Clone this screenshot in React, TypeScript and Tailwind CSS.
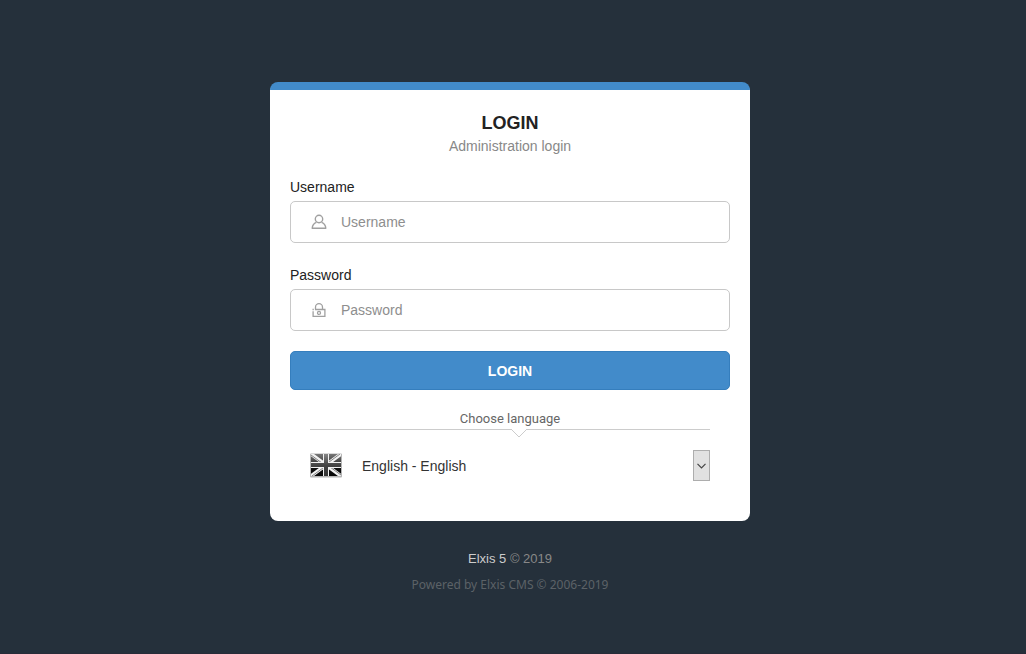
import React from "react";

function UserIcon() {
  return (
    <svg viewBox="0 0 16 16" className="h-4 w-4" fill="none" stroke="#a0a0a0" strokeWidth="1.4" strokeLinejoin="round" aria-hidden="true">
      <circle cx="8" cy="5" r="3.7" />
      <path d="M5.4 8.3C3 9.2 1.4 11 1.2 14.3H14.8C14.6 11 13 9.2 10.6 8.3" />
    </svg>
  );
}

function LockIcon() {
  return (
    <svg viewBox="0 0 16 16" className="h-4 w-4" fill="none" stroke="#a0a0a0" strokeWidth="1.3" aria-hidden="true">
      <path d="M4.5 7.5V5.2a3.5 3.5 0 0 1 7 0V7.5" />
      <path d="M4 7.5H13.9V14.4H2.1V9.2" />
      <path d="M1.5 7.5h1.3" />
      <circle cx="8" cy="10.9" r="1.5" />
    </svg>
  );
}

function FlagIcon() {
  return (
    <svg viewBox="0 0 32 25" className="h-[25px] w-8 shrink-0" aria-hidden="true">
      <defs>
        <linearGradient id="field" x1="0" y1="0" x2="0" y2="1">
          <stop offset="0" stopColor="#777777" />
          <stop offset="0.5" stopColor="#303030" />
          <stop offset="0.52" stopColor="#111111" />
          <stop offset="1" stopColor="#080808" />
        </linearGradient>
        <linearGradient id="cross" x1="0" y1="0" x2="0" y2="1">
          <stop offset="0" stopColor="#858585" />
          <stop offset="0.5" stopColor="#444444" />
          <stop offset="1" stopColor="#333333" />
        </linearGradient>
        <clipPath id="flagShape">
          <rect x="1" y="1" width="30" height="22" />
        </clipPath>
      </defs>
      <rect x="0" y="0.5" width="32" height="24" rx="1" fill="#b5b5b5" />
      <g clipPath="url(#flagShape)">
        <rect x="1" y="1" width="30" height="22" fill="url(#field)" />
        <path d="M1 1L31 23M31 1L1 23" stroke="#f2f2f2" strokeWidth="3.6" />
        <path d="M1 2L14 11.5M30 1L17 10.5M31 22L18 12.5M2 23L15 13.5" stroke="#666666" strokeWidth="0.8" />
        <path d="M16 1V23M1 12H31" stroke="#f2f2f2" strokeWidth="6" />
        <path d="M14 1h4v9h13v4H18v9h-4v-9H1v-4h13z" fill="url(#cross)" />
      </g>
    </svg>
  );
}

interface FieldProps {
  id: string;
  label: string;
  type: string;
  icon: React.ReactNode;
}

function Field({ id, label, type, icon }: FieldProps) {
  return (
    <div className="mb-5">
      <label htmlFor={id} className="mb-1 block text-sm leading-5 text-[#222222]">
        {label}
      </label>
      <div className="flex h-[42px] items-center gap-[14px] rounded-[5px] border border-[#c8c8c8] bg-white pr-3 pl-5 focus-within:border-[#428bca]">
        {icon}
        <input
          id={id}
          name={id}
          type={type}
          placeholder={label}
          className="h-full min-w-0 flex-1 bg-transparent text-sm text-[#222222] outline-none placeholder:text-[#8e8e8e]"
        />
      </div>
    </div>
  );
}

export default function App() {
  return (
    <div className="min-h-screen border-b border-[#272b38] bg-[#25303b] pt-[82px] pr-[6px] font-['Liberation_Sans',Arial,sans-serif]">
      <main className="mx-auto w-full max-w-[480px] rounded-lg border-t-8 border-[#428bca] bg-white px-5 pt-[22px] pb-10">
        <h1 className="text-center text-lg leading-[22px] font-bold text-[#222222]">LOGIN</h1>
        <p className="mb-[19px] text-center text-sm leading-6 text-[#888888]">Administration login</p>
        <form onSubmit={(event) => event.preventDefault()}>
          <div className="flex flex-col gap-0.5">
            <Field id="username" label="Username" type="text" icon={<UserIcon />} />
            <Field id="password" label="Password" type="password" icon={<LockIcon />} />
          </div>
          <button
            type="submit"
            className="block h-[39px] w-full rounded-[5px] border border-[#357ebd] bg-[#428bca] text-sm font-bold text-white hover:bg-[#3a80bd]"
          >
            LOGIN
          </button>
          <div className="px-5 pt-[19px]">
            <label htmlFor="language" className="relative block border-b border-[#cccccc] text-center font-[Roboto,sans-serif] text-[13px] leading-5 text-[#666666]">
              Choose language
              <svg viewBox="0 0 18 9" className="absolute top-full left-[200px] h-[9px] w-[18px]" fill="#ffffff" aria-hidden="true">
                <path d="M1 0L9 8L17 0" stroke="#cccccc" />
              </svg>
            </label>
            <div className="mt-5 flex items-center gap-5">
              <FlagIcon />
              <div className="relative min-w-0 flex-1">
                <select id="language" className="block h-[31px] w-full appearance-none bg-transparent pr-6 text-sm text-[#333333] outline-none">
                  <option>English - English</option>
                </select>
                <span className="pointer-events-none absolute inset-y-0 right-0 flex w-[17px] items-center justify-center border border-[#adadad] bg-[#e1e1e1]">
                  <svg viewBox="0 0 9 6" className="h-1.5 w-[9px]" fill="none" stroke="#444444" strokeWidth="1.2" aria-hidden="true">
                    <path d="M0.5 0.8L4.5 4.8L8.5 0.8" />
                  </svg>
                </span>
              </div>
            </div>
          </div>
        </form>
      </main>
      <footer className="pt-7 text-center">
        <p className="text-[13px] leading-5 text-[#888888]">
          <a href="#elxis" className="text-[#cccccc]">Elxis 5</a> © 2019
        </p>
        <p className="mt-[6px] font-['Noto_Sans',sans-serif] text-xs leading-5 text-[#5c6267]">
          Powered by <a href="#cms">Elxis CMS</a> © 2006-2019
        </p>
      </footer>
    </div>
  );
}
